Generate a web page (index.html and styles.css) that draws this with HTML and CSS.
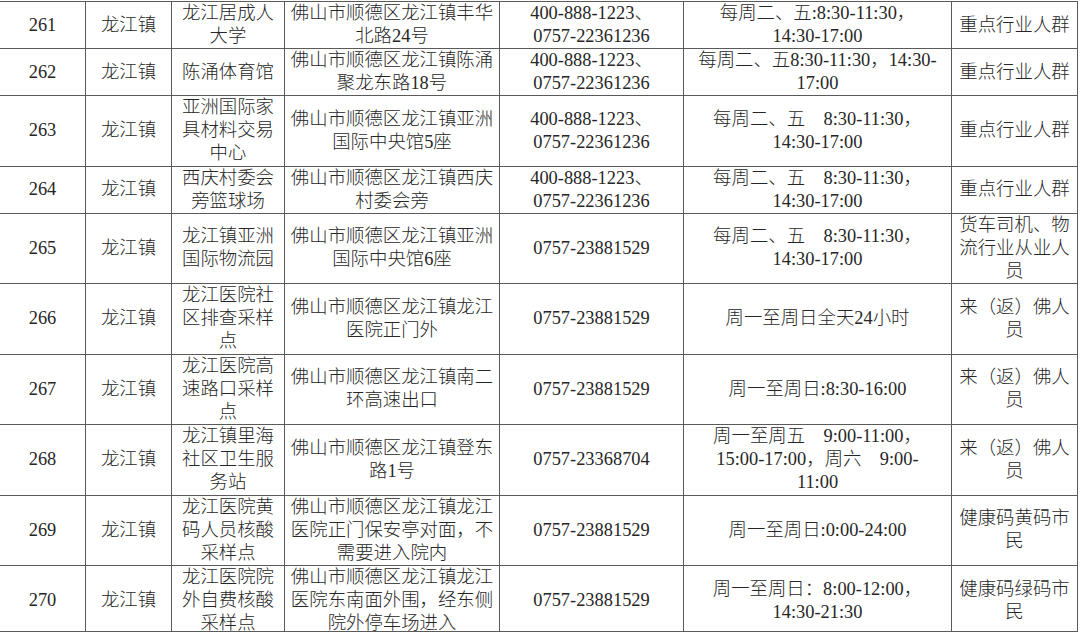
FILE: index.html
```html
<!DOCTYPE html>
<html lang="zh-CN">
<head>
<meta charset="utf-8">
<title>龙江镇核酸采样点</title>
<link rel="stylesheet" href="styles.css">
</head>
<body>
<div class="frame">
<table class="sites">
<colgroup>
<col class="c-no"><col class="c-town"><col class="c-name"><col class="c-addr"><col class="c-tel"><col class="c-time"><col class="c-who">
</colgroup>
<tbody>
<tr class="r2">
<td>261</td><td>龙江镇</td><td>龙江居成人<br>大学</td><td>佛山市顺德区龙江镇丰华<br>北路24号</td><td>400-888-1223、<br>0757-22361236</td><td>每周二、五:8:30-11:30，<br>14:30-17:00</td><td>重点行业人群</td>
</tr>
<tr class="r2">
<td>262</td><td>龙江镇</td><td>陈涌体育馆</td><td>佛山市顺德区龙江镇陈涌<br>聚龙东路18号</td><td>400-888-1223、<br>0757-22361236</td><td>每周二、五8:30-11:30，14:30-<br>17:00</td><td>重点行业人群</td>
</tr>
<tr class="r3">
<td>263</td><td>龙江镇</td><td>亚洲国际家<br>具材料交易<br>中心</td><td>佛山市顺德区龙江镇亚洲<br>国际中央馆5座</td><td>400-888-1223、<br>0757-22361236</td><td>每周二、五　8:30-11:30，<br>14:30-17:00</td><td>重点行业人群</td>
</tr>
<tr class="r2">
<td>264</td><td>龙江镇</td><td>西庆村委会<br>旁篮球场</td><td>佛山市顺德区龙江镇西庆<br>村委会旁</td><td>400-888-1223、<br>0757-22361236</td><td>每周二、五　8:30-11:30，<br>14:30-17:00</td><td>重点行业人群</td>
</tr>
<tr class="r3">
<td>265</td><td>龙江镇</td><td>龙江镇亚洲<br>国际物流园</td><td>佛山市顺德区龙江镇亚洲<br>国际中央馆6座</td><td>0757-23881529</td><td>每周二、五　8:30-11:30，<br>14:30-17:00</td><td>货车司机、物<br>流行业从业人<br>员</td>
</tr>
<tr class="r3">
<td>266</td><td>龙江镇</td><td>龙江医院社<br>区排查采样<br>点</td><td>佛山市顺德区龙江镇龙江<br>医院正门外</td><td>0757-23881529</td><td>周一至周日全天24小时</td><td>来（返）佛人<br>员</td>
</tr>
<tr class="r3">
<td>267</td><td>龙江镇</td><td>龙江医院高<br>速路口采样<br>点</td><td>佛山市顺德区龙江镇南二<br>环高速出口</td><td>0757-23881529</td><td>周一至周日:8:30-16:00</td><td>来（返）佛人<br>员</td>
</tr>
<tr class="r3">
<td>268</td><td>龙江镇</td><td>龙江镇里海<br>社区卫生服<br>务站</td><td>佛山市顺德区龙江镇登东<br>路1号</td><td>0757-23368704</td><td>周一至周五　9:00-11:00，<br>15:00-17:00，周六　9:00-<br>11:00</td><td>来（返）佛人<br>员</td>
</tr>
<tr class="r3">
<td>269</td><td>龙江镇</td><td>龙江医院黄<br>码人员核酸<br>采样点</td><td>佛山市顺德区龙江镇龙江<br>医院正门保安亭对面，不<br>需要进入院内</td><td>0757-23881529</td><td>周一至周日:0:00-24:00</td><td>健康码黄码市<br>民</td>
</tr>
<tr class="r3">
<td>270</td><td>龙江镇</td><td>龙江医院院<br>外自费核酸<br>采样点</td><td>佛山市顺德区龙江镇龙江<br>医院东南面外围，经东侧<br>院外停车场进入</td><td>0757-23881529</td><td>周一至周日：8:00-12:00，<br>14:30-21:30</td><td>健康码绿码市<br>民</td>
</tr>
</tbody>
</table>
</div>
</body>
</html>
```

FILE: styles.css
```css
html, body {
  margin: 0;
  padding: 0;
  background: #ffffff;
}

body {
  width: 1080px;
  height: 637px;
  overflow: hidden;
}

.frame {
  height: 632px;
  margin-left: -1px;
  padding-top: 1px;
  box-sizing: border-box;
  overflow: hidden;
  position: relative;
}

.frame::after {
  content: "";
  position: absolute;
  left: 0;
  bottom: 0;
  width: 1078px;
  height: 1px;
  background: #5a5a5a;
}

.sites {
  border-collapse: collapse;
  table-layout: fixed;
  width: 1078px;
  font-family: "Liberation Serif", "Noto Sans CJK SC", serif;
  font-size: 18.4px;
  font-weight: 300;
  line-height: 23px;
  color: #262626;
}

.sites td {
  border: 1px solid #5a5a5a;
  padding: 0 2px;
  text-align: center;
  vertical-align: middle;
  white-space: nowrap;
  overflow: hidden;
}

.sites .r3 td {
  padding-top: 0.25px;
  padding-bottom: 0.25px;
}

.c-no { width: 86px; }
.c-town { width: 86px; }
.c-name { width: 113px; }
.c-addr { width: 215px; }
.c-tel { width: 184px; }
.c-time { width: 268px; }
.c-who { width: 126px; }
```
